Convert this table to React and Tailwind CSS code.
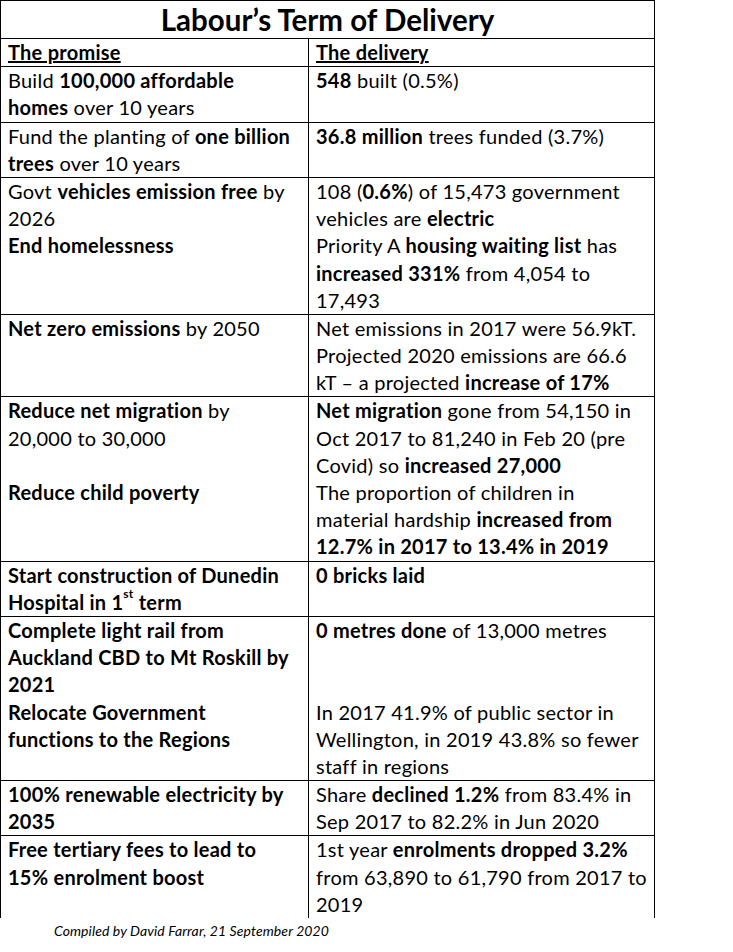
import React from "react";

const rows = [
    {
        left: [
            <>Build <b>100,000 affordable</b></>,
            <><b>homes</b> over 10 years</>,
        ],
        right: [<><b>548</b> built (0.5%)</>],
    },
    {
        left: [
            <>Fund the planting of <b>one billion</b></>,
            <><b>trees</b> over 10 years</>,
        ],
        right: [<><b>36.8 million</b> trees funded (3.7%)</>],
    },
    {
        left: [
            <>Govt <b>vehicles emission free</b> by</>,
            <>2026</>,
            <b>End homelessness</b>,
        ],
        right: [
            <>108 (<b>0.6%</b>) of 15,473 government</>,
            <>vehicles are <b>electric</b></>,
            <>Priority A <b>housing waiting list</b> has</>,
            <><b>increased 331%</b> from 4,054 to</>,
            <>17,493</>,
        ],
    },
    {
        left: [<><b>Net zero emissions</b> by 2050</>],
        right: [
            <>Net emissions in 2017 were 56.9kT.</>,
            <>Projected 2020 emissions are 66.6</>,
            <>kT – a projected <b>increase of 17%</b></>,
        ],
    },
    {
        left: [
            <><b>Reduce net migration</b> by</>,
            <>20,000 to 30,000</>,
            <>&nbsp;</>,
            <b>Reduce child poverty</b>,
        ],
        right: [
            <><b>Net migration</b> gone from 54,150 in</>,
            <>Oct 2017 to 81,240 in Feb 20 (pre</>,
            <>Covid) so <b>increased 27,000</b></>,
            <>The proportion of children in</>,
            <>material hardship <b>increased from</b></>,
            <b>12.7% in 2017 to 13.4% in 2019</b>,
        ],
    },
    {
        left: [
            <b>Start construction of Dunedin</b>,
            <b>
                Hospital in 1<sup className="text-[12px] align-[6px]">st</sup> term
            </b>,
        ],
        right: [<b>0 bricks laid</b>],
    },
    {
        left: [
            <b>Complete light rail from</b>,
            <b>Auckland CBD to Mt Roskill by</b>,
            <b>2021</b>,
            <b>Relocate Government</b>,
            <b>functions to the Regions</b>,
        ],
        right: [
            <><b>0 metres done</b> of 13,000 metres</>,
            <>&nbsp;</>,
            <>&nbsp;</>,
            <>In 2017 41.9% of public sector in</>,
            <>Wellington, in 2019 43.8% so fewer</>,
            <>staff in regions</>,
        ],
    },
    {
        left: [<b>100% renewable electricity by</b>, <b>2035</b>],
        right: [
            <>Share <b>declined 1.2%</b> from 83.4% in</>,
            <>Sep 2017 to 82.2% in Jun 2020</>,
        ],
    },
    {
        left: [<b>Free tertiary fees to lead to</b>, <b>15% enrolment boost</b>],
        right: [
            <>1st year <b>enrolments dropped 3.2%</b></>,
            <>from 63,890 to 61,790 from 2017 to</>,
            <>2019</>,
        ],
    },
];

function Lines({ items }) {
    return (
        <div className="flex flex-col">
            {items.map((line, i) => (
                <div key={i} className="whitespace-nowrap h-[27.2px]">
                    {line}
                </div>
            ))}
        </div>
    );
}

export default function App() {
    return (
        <div className="w-[733px] h-[952px] bg-white text-black font-['Lato',sans-serif]">
            <div className="w-[655px] border-l border-r border-t border-black">
                {/* Titre */}
                <div className="h-[38px] border-b border-black flex items-center justify-center">
                    <h1 className="text-[29.5px] font-bold leading-none">
                        Labour’s Term of Delivery
                    </h1>
                </div>

                <div className="text-[20px] leading-[27.2px] tracking-[0.25px]">
                    {/* En-tête */}
                    <div className="grid grid-cols-[308px_1fr] border-b border-black">
                        <div className="border-r border-black pl-[7px] font-bold underline">
                            The promise
                        </div>
                        <div className="pl-[7px] font-bold underline">The delivery</div>
                    </div>

                    {rows.map((row, i) => (
                        <div
                            key={i}
                            className={
                                i === rows.length - 1
                                    ? "grid grid-cols-[308px_1fr]"
                                    : "grid grid-cols-[308px_1fr] border-b border-black"
                            }
                        >
                            <div className="border-r border-black pl-[7px]">
                                <Lines items={row.left} />
                            </div>
                            <div className="pl-[7px]">
                                <Lines items={row.right} />
                            </div>
                        </div>
                    ))}
                </div>
            </div>

            <p className="pl-[54px] pt-[2px] text-[14px] italic tracking-[0.1px]">
                Compiled by David Farrar, 21 September 2020
            </p>
        </div>
    );
}
